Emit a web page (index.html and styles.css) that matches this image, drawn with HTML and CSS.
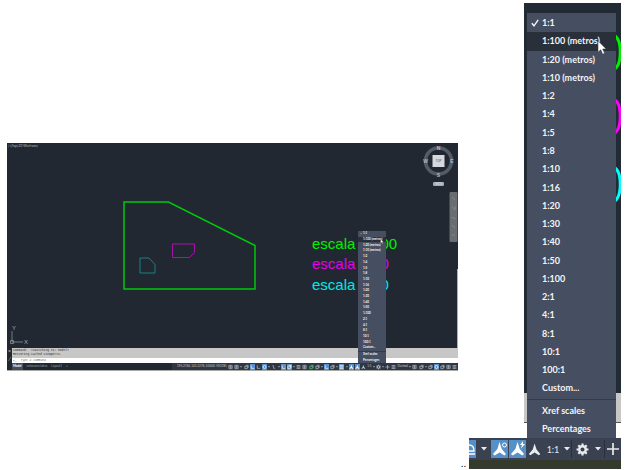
FILE: index.html
```html
<!DOCTYPE html>
<html lang="es">
<head>
<meta charset="utf-8">
<title>Escala de anotación</title>
<link rel="stylesheet" href="styles.css">
</head>
<body>
<svg class="defs" aria-hidden="true">
  <symbol id="caret" viewBox="0 0 6 4"><path d="M0 0h6L3 3.6z" fill="currentColor"/></symbol>
  <symbol id="annot" viewBox="0 0 16 16"><path d="M7.500 1 9.800 8 14 13 12.400 14.600 7.600 11.400 2.600 14.600 1 13 5.400 8z" fill="currentColor"/></symbol>
  <symbol id="gear" viewBox="0 0 14 14"><circle cx="7" cy="7" r="3.5" fill="none" stroke="currentColor" stroke-width="2.6"/><path d="M7 .6v2.6M7 10.8v2.6M.6 7h2.600M10.800 7h2.600M2.500 2.500l1.800 1.800M9.700 9.700l1.800 1.800M11.500 2.500 9.700 4.300M4.300 9.700l-1.800 1.800" stroke="currentColor" stroke-width="2.4"/></symbol>
  <symbol id="plus" viewBox="0 0 14 14"><path d="M7 1v12M1 7h12" stroke="currentColor" stroke-width="1.7"/></symbol>
  <symbol id="check" viewBox="0 0 8 8"><path d="M.8 4.2 3 6.8 7.2.9" fill="none" stroke="currentColor" stroke-width="1.4"/></symbol>
  <symbol id="cursor" viewBox="0 0 10 15"><path d="M1 .8v11.4l2.7-2.4 2 4.4 2-.9-2-4.3h3.5z" fill="#fff" stroke="#333" stroke-width=".5"/></symbol>
  <symbol id="grid" viewBox="0 0 6 6"><path d="M1 1h4v4H1zM3 1v4M1 3h4" fill="none" stroke="currentColor" stroke-width=".7"/></symbol>
  <symbol id="corner" viewBox="0 0 6 6"><path d="M1.5 1v3.6H5" fill="none" stroke="currentColor" stroke-width=".8"/></symbol>
  <symbol id="slash" viewBox="0 0 6 6"><path d="M1.5 1.5h1.5v3h2" fill="none" stroke="currentColor" stroke-width=".7"/></symbol>
  <symbol id="box" viewBox="0 0 6 6"><path d="M1 2h3v3H1zM2.5 1H5v3" fill="none" stroke="currentColor" stroke-width=".8"/></symbol>
  <symbol id="lines" viewBox="0 0 6 6"><path d="M.7 1.4h4.6M.7 3h4.6M.7 4.6h4.6" stroke="currentColor" stroke-width=".9"/></symbol>
  <symbol id="circle" viewBox="0 0 6 6"><circle cx="3" cy="3" r="1.8" fill="none" stroke="currentColor" stroke-width=".9"/></symbol>
</svg>

<main class="page">
  <section class="app" aria-label="Model">
    <svg class="drawing" viewBox="0 0 451 205">
      <text class="view-label" x="1" y="4">[-][Top][2D Wireframe]</text>
      <path class="shape green" d="M117 59h44.500l86.500 43.500V146H117z"/>
      <path class="shape magenta" d="M165.500 101h22v8.500l-5 5h-17z"/>
      <path class="shape cyan" d="M133 115h9l6 6.500V130h-15z"/>
      <g class="scale-label">
        <text x="305" y="106" fill="#00f000">escala 1:100</text>
        <text x="305" y="126" fill="#e400e4">escala 1:20</text>
        <text x="305" y="147" fill="#00e8e8">escala 1:10</text>
      </g>
      <circle cx="431.500" cy="18" r="13" fill="none" stroke="#555b64" stroke-width="3.600"/>
      <rect x="425.500" y="12" width="12" height="12" fill="#d5d8dc"/>
      <g class="compass">
        <text x="431.500" y="7">N</text><text x="418.500" y="20">W</text><text x="445" y="20">E</text><text x="431.500" y="34">S</text>
      </g>
      <text class="top" x="431.500" y="19">TOP</text>
      <rect x="426" y="39" width="11" height="4" rx="1" fill="#a7abb3"/>
      <text class="wcs" x="431.500" y="42">WCS</text>
      <rect x="442.500" y="49" width="8" height="50" rx="1" fill="#696d72"/>
      <path d="M445 54l3 3M445 64l3 3v-4M444.500 74l4 2M445 82l3 3M445 92h3" stroke="#85898e" stroke-width="1" fill="none"/>
      <path d="M450.500 126v79" stroke="#aeb2b7"/>
      <path d="M5 188v11h11M3.500 197.500h3v3h-3z" fill="none" stroke="#8c9198" stroke-width=".8"/>
      <g class="axis"><text x="5" y="187">Y</text><text x="17" y="201">X</text></g>
    </svg>

    <div class="command">
      <div class="command-grip"><span>×</span><span>⁄</span></div>
      <div class="command-body">
        <p>Command:&nbsp; &lt;Switching to: Model&gt;</p>
        <p>Restoring cached viewports.</p>
        <label class="prompt"><span>▸_</span><input type="text" placeholder="Type a command" aria-label="Command line"></label>
      </div>
    </div>

    <div class="status">
      <nav class="tabs"><a class="current" href="#">Model</a><a href="#">coloscorrelativa</a><a href="#">Layout1</a><a href="#">+</a></nav>
      <div class="tools">
        <span class="coords">195.2746, 143.2278, 0.0000</span><span class="mode">MODEL</span>
        <svg><use href="#grid"/></svg><svg><use href="#grid"/></svg><svg class="arrow"><use href="#caret"/></svg><svg><use href="#box"/></svg><svg class="on"><use href="#corner"/></svg><svg><use href="#corner"/></svg><svg class="on"><use href="#circle"/></svg><svg class="arrow"><use href="#caret"/></svg><svg><use href="#slash"/></svg><svg class="arrow"><use href="#caret"/></svg><svg class="on"><use href="#corner"/></svg><svg class="on"><use href="#box"/></svg><svg class="arrow"><use href="#caret"/></svg><svg><use href="#lines"/></svg><svg><use href="#grid"/></svg><svg class="leaf"><use href="#box"/></svg><svg><use href="#box"/></svg><svg class="arrow"><use href="#caret"/></svg><svg class="on"><use href="#corner"/></svg><svg><use href="#box"/></svg><svg class="arrow"><use href="#caret"/></svg><svg class="on"><use href="#lines"/></svg><svg class="arrow"><use href="#caret"/></svg><svg class="on"><use href="#annot"/></svg><svg class="on"><use href="#annot"/></svg><svg><use href="#annot"/></svg><span>1:1</span><svg class="arrow"><use href="#caret"/></svg><svg><use href="#gear"/></svg><svg class="arrow"><use href="#caret"/></svg><svg><use href="#plus"/></svg><svg><use href="#lines"/></svg><span class="units">Decimal</span><svg class="arrow"><use href="#caret"/></svg><svg><use href="#grid"/></svg><svg><use href="#box"/></svg><svg class="arrow"><use href="#caret"/></svg><svg><use href="#box"/></svg><svg class="on"><use href="#circle"/></svg><svg><use href="#box"/></svg><svg><use href="#grid"/></svg><svg><use href="#lines"/></svg>
      </div>
    </div>

    <div class="menu small">
      <button class="checked"><svg class="tick"><use href="#check"/></svg>1:1</button>
      <button class="active">1:100 (metros)<svg class="pointer"><use href="#cursor"/></svg></button>
      <button>1:20 (metros)</button><button>1:10 (metros)</button>
      <button>1:2</button><button>1:4</button><button>1:5</button><button>1:8</button><button>1:10</button><button>1:16</button><button>1:20</button><button>1:30</button><button>1:40</button><button>1:50</button><button>1:100</button><button>2:1</button><button>4:1</button><button>8:1</button><button>10:1</button><button>100:1</button><button>Custom...</button>
      <hr>
      <button>Xref scales</button><button>Percentages</button>
    </div>
  </section>

  <span class="dots">..</span>

  <section class="detail" aria-label="Annotation scale">
    <div class="backdrop">
      <svg class="digits" viewBox="0 0 5 190" aria-hidden="true">
        <g fill="none" stroke-width="3">
          <path d="M-1 24c7 5 7 27 0 33" stroke="#00f000"/>
          <path d="M-1 88c7 5 7 27 0 33" stroke="#f0f"/>
          <path d="M-1 156c7 5 7 27 0 33" stroke="#0ff"/>
        </g>
      </svg>
      <div class="menu large">
        <button class="checked"><svg class="tick"><use href="#check"/></svg>1:1</button>
        <button class="active">1:100 (metros)<svg class="pointer"><use href="#cursor"/></svg></button>
        <button>1:20 (metros)</button><button>1:10 (metros)</button>
        <button>1:2</button><button>1:4</button><button>1:5</button><button>1:8</button><button>1:10</button><button>1:16</button><button>1:20</button><button>1:30</button><button>1:40</button><button>1:50</button><button>1:100</button><button>2:1</button><button>4:1</button><button>8:1</button><button>10:1</button><button>100:1</button><button>Custom...</button>
        <hr>
        <button>Xref scales</button><button>Percentages</button>
      </div>
    </div>
    <div class="toolbar">
      <button class="tool on cut" aria-label="Isodraft"><svg viewBox="0 0 7 16"><path d="M0 4c4 0 5 3 5 6H0M0 13h6" fill="none" stroke="currentColor" stroke-width="1.300"/></svg></button>
      <button class="drop" aria-label="Options"><svg><use href="#caret"/></svg></button>
      <button class="tool on" aria-label="Annotation visibility"><svg viewBox="0 0 16 16"><use href="#annot" width="16" height="16"/><circle cx="12.500" cy="4" r="2" fill="none" stroke="currentColor"/></svg></button>
      <button class="tool on" aria-label="Auto scale"><svg viewBox="0 0 16 16"><use href="#annot" width="16" height="16"/><path d="M13 0l-3 4h2l-1 3.500 4-4.500h-2z" fill="currentColor"/></svg></button>
      <button class="scale"><svg class="annot"><use href="#annot"/></svg><span>1:1</span><svg class="caret"><use href="#caret"/></svg></button>
      <button class="settings" aria-label="Workspace"><svg class="gear"><use href="#gear"/></svg><svg class="caret"><use href="#caret"/></svg></button>
      <button class="add" aria-label="Add"><svg><use href="#plus"/></svg></button>
    </div>
    <div class="desktop"></div>
  </section>
</main>
</body>
</html>
```
FILE: styles.css
```css
* { box-sizing: border-box; }

body {
  margin: 0;
  background: #fff;
  font-family: Lato, "Open Sans", sans-serif;
}

button {
  margin: 0;
  padding: 0;
  border: 0;
  background: none;
  color: inherit;
  font: inherit;
}

svg { display: block; }
.defs { position: absolute; width: 0; height: 0; }

.page {
  display: grid;
  grid-template-columns: 1fr 11px 152px;
  align-items: start;
  padding: 3px 7px 0;
}

/* Application window */
.app {
  position: relative;
  margin-top: 140px;
  background: #222831;
  border-bottom: 1px solid #a9aca4;
}

.drawing { width: 100%; }
.shape { fill: none; }
.green { stroke: #00c80a; stroke-width: 1.5; }
.magenta { stroke: #a514a8; stroke-width: 1; }
.cyan { stroke: #168087; stroke-width: 1; }
.scale-label { font: 15px "Liberation Sans", sans-serif; }
.view-label { font-size: 3px; fill: #b8bcc2; }
.compass { font: bold 5px "Liberation Sans", sans-serif; fill: #b4b8be; text-anchor: middle; }
.top { font-size: 3px; fill: #4b5058; text-anchor: middle; }
.wcs { font-size: 3px; fill: #e0e2e6; text-anchor: middle; }
.axis { font: 6px "Liberation Sans", sans-serif; fill: #a2a7ae; }

.command { display: flex; }

.command-grip {
  display: flex;
  flex-direction: column;
  justify-content: space-around;
  width: 5px;
  color: #d8dade;
  font-size: 5px;
  line-height: 5px;
  text-align: center;
}

.command-body {
  flex: 1;
  padding-top: 1px;
  background: #c7c7c7;
  color: #333;
  font: 3px "Liberation Mono", monospace;
}

.command-body p { margin: 0 1px; line-height: 4px; }

.prompt {
  display: flex;
  gap: 4px;
  height: 5px;
  margin-top: 1px;
  padding-left: 1px;
  background: #fff;
  line-height: 5px;
}

.prompt input {
  flex: 1;
  min-width: 0;
  padding: 0;
  border: 0;
  background: none;
  font: italic 3px "Liberation Mono", monospace;
}

.status {
  display: flex;
  justify-content: space-between;
  align-items: center;
  height: 7px;
  color: #c3c8d0;
  font-size: 3px;
  line-height: 7px;
}

.tabs { display: flex; gap: 4px; padding-left: 5px; }
.tabs a { color: #9ba1aa; text-decoration: none; }
.tabs .current { padding: 0 1px; background: #444c59; color: #fff; font-weight: bold; }

.tools {
  display: flex;
  justify-content: space-between;
  align-items: center;
  width: 286px;
  padding-left: 5px;
  background: #303744;
}

.tools svg { flex: none; width: 5px; height: 6px; }
.tools .arrow { width: 2px; height: 2px; }
.tools .on { background: #5690cf; color: #fff; }
.tools .leaf { color: #62d084; }
.tools .coords { white-space: nowrap; }

/* Scale menu, shared by both sizes */
.menu {
  display: flex;
  flex-direction: column;
  background: #464e61;
  color: #f4f5f7;
  font-weight: 700;
}

.menu button {
  position: relative;
  display: flex;
  flex: 1;
  align-items: center;
  min-height: 0;
  text-align: left;
  white-space: nowrap;
}

.menu .active { background: #29303a; }
.menu hr { width: 100%; border: 0; border-top: 1px solid #343b49; }
.menu .tick, .menu .pointer { position: absolute; }

.small {
  position: absolute;
  right: 72px;
  bottom: 7px;
  width: 28px;
  height: 132px;
  font-size: 3px;
  line-height: 3px;
}

.small button { padding-left: 5px; }
.small hr { margin: 0; }
.small .tick { left: 2px; width: 2px; height: 3px; }
.small .pointer { left: 22px; top: 2px; width: 4px; height: 5px; }

.dots {
  align-self: end;
  font: 10px/10px "Liberation Sans", sans-serif;
  text-align: center;
}

/* Enlarged detail */
.backdrop {
  position: relative;
  margin-left: 55px;
  padding: 10px 5px 0 3px;
  background: linear-gradient(#222a33 390px, #c7c7c7 390px 419px, #555 419px 420px, #fff 420px);
}

.digits { position: absolute; top: 9px; right: 0; width: 5px; height: 190px; }

.large {
  height: 425px;
  padding-top: 1px;
  font-size: 9px;
  line-height: 12px;
}

.large button { padding-left: 15px; }
.large hr { margin: 1px 0 2px; }
.large .tick { left: 4px; width: 8px; height: 8px; }
.large .pointer { left: 70px; top: 8px; width: 10px; height: 15px; }

.toolbar {
  display: flex;
  align-items: stretch;
  height: 22px;
  padding: 2px 0;
  background: #3a4252;
  color: #e8eaed;
  font-size: 9px;
}

.toolbar button { display: flex; align-items: center; justify-content: center; }
.toolbar .tool { width: 17px; margin-right: 1px; background: #5690c8; color: #fff; }
.toolbar .tool svg { width: 16px; height: 16px; }
.toolbar .cut { width: 7px; margin: 0; }
.toolbar .cut svg { width: 7px; }
.toolbar .drop { width: 15px; }
.toolbar .drop svg, .toolbar .caret { width: 6px; height: 4px; }
.toolbar .scale { width: 44px; gap: 5px; }
.toolbar .annot { width: 14px; height: 15px; }
.toolbar .settings { width: 34px; gap: 6px; border: solid #29303b; border-width: 0 1px; }
.toolbar .gear { width: 13px; height: 13px; }
.toolbar .add { flex: 1; }
.toolbar .add svg { width: 14px; height: 14px; }

.desktop { height: 9px; background: #343b2c; }
```
